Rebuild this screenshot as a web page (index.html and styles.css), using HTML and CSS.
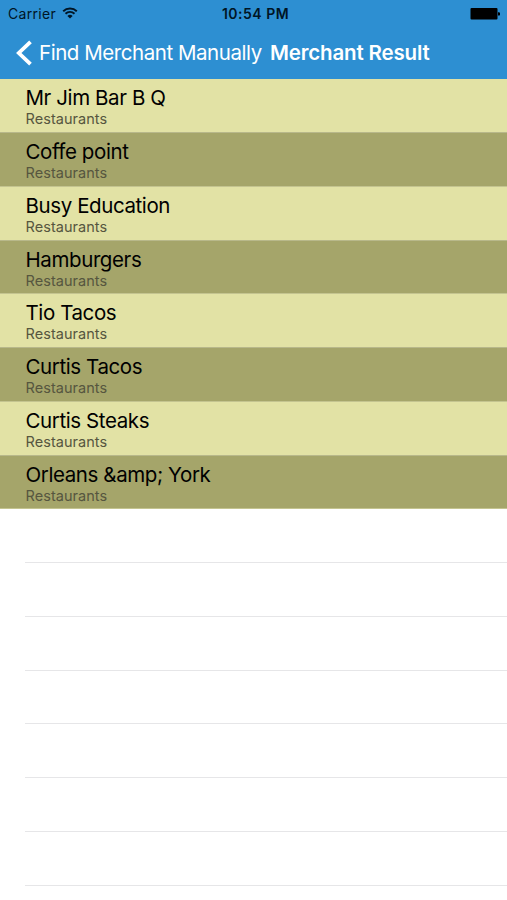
FILE: index.html
```
<!DOCTYPE html>
<html lang="en">

<head>
    <meta charset="UTF-8">
    <title>Merchant Result</title>
    <link rel="stylesheet" href="styles.css">
</head>

<body>

    <header>
        <div class="status-bar">
            <div class="carrier">
                <span>Carrier</span>
                <svg class="wifi" viewBox="0 0 16 12" width="16" height="12">
                    <path d="M1.2 4.2a9.8 9.8 0 0 1 13.6 0M3.5 6.7a6.5 6.5 0 0 1 9 0" fill="none" stroke="#001525" stroke-width="1.9"/>
                    <path d="M8 11.6L5.4 9a3.8 3.8 0 0 1 5.2 0z" fill="#001525"/>
                </svg>
            </div>
            <span class="time">10:54 PM</span>
            <svg class="battery" viewBox="0 0 30 12" width="30" height="12">
                <rect x="0.5" y="0" width="27" height="11.5" rx="1"/>
                <path d="M28 4.3h.7a1.5 1.5 0 0 1 0 3.2H28z"/>
            </svg>
        </div>
        <nav class="nav-bar">
            <a class="back">
                <svg viewBox="0 0 17 28" width="17" height="28">
                    <path d="M14.5 2.8L2.8 14L14.5 25.2" fill="none" stroke="#fff" stroke-width="3.8"/>
                </svg>
                <span>Find Merchant Manually</span>
            </a>
            <h1>Merchant Result</h1>
        </nav>
    </header>

    <ul class="merchants">
        <li><h2>Mr Jim Bar B Q</h2><p>Restaurants</p></li>
        <li><h2>Coffe point</h2><p>Restaurants</p></li>
        <li><h2>Busy Education</h2><p>Restaurants</p></li>
        <li><h2>Hamburgers</h2><p>Restaurants</p></li>
        <li><h2>Tio Tacos</h2><p>Restaurants</p></li>
        <li><h2>Curtis Tacos</h2><p>Restaurants</p></li>
        <li><h2>Curtis Steaks</h2><p>Restaurants</p></li>
        <li><h2>Orleans &amp;amp; York</h2><p>Restaurants</p></li>
    </ul>

    <div class="empty-rows">
        <div></div>
        <div></div>
        <div></div>
        <div></div>
        <div></div>
        <div></div>
        <div></div>
    </div>

</body>

</html>
```
FILE: styles.css
```
* {
    box-sizing: border-box;
    margin: 0;
    padding: 0;
}

body {
    height: 900px;
    overflow: hidden;
    background: #fff;
    font-family: Inter, "Liberation Sans", sans-serif;
}

header {
    height: 79.3px;
    background: #2d8fd2;
}

.status-bar {
    display: grid;
    grid-template-columns: 1fr auto 1fr;
    align-items: center;
    height: 27px;
    padding: 0 7px 0 8px;
    color: #001525;
    font-size: 14px;
}

.carrier {
    display: flex;
    align-items: center;
    gap: 6px;
    letter-spacing: 0.3px;
}

.wifi {
    margin-top: -1px;
}

.time {
    padding-left: 3px;
    font-weight: 600;
    letter-spacing: 0.5px;
}

.battery {
    justify-self: end;
}

.nav-bar {
    display: flex;
    align-items: center;
    height: 51px;
    padding-left: 16px;
    color: #fff;
    font-size: 20.5px;
    white-space: nowrap;
}

.back {
    display: flex;
    align-items: center;
    width: 254px;
    gap: 6px;
    letter-spacing: -0.45px;
}

.nav-bar h1 {
    font-size: 20.5px;
    font-weight: 600;
    letter-spacing: -0.16px;
}

.merchants {
    list-style: none;
}

.merchants li {
    height: 53.75px;
    padding: 6px 0 0 25.5px;
    background: #e2e2a5;
    border-bottom: 1px solid #b8b88a;
}

.merchants li:nth-child(even) {
    background: #a5a56a;
    border-bottom-color: #c4c490;
}

.merchants h2 {
    font-size: 20.5px;
    font-weight: 400;
    letter-spacing: -0.4px;
    line-height: 26px;
}

.merchants p {
    color: #56563f;
    font-size: 14.5px;
    letter-spacing: 0.05px;
    line-height: 16px;
}

.empty-rows div {
    height: 53.75px;
    margin-left: 25px;
    border-bottom: 1px solid #e6e6e8;
}
```
